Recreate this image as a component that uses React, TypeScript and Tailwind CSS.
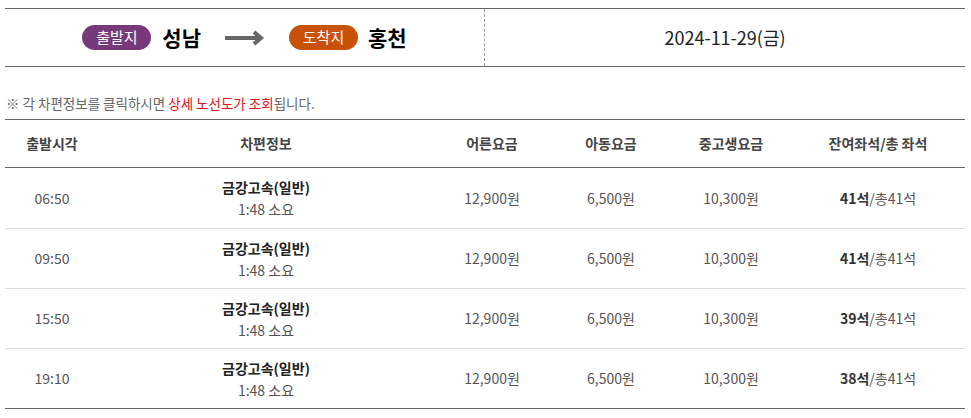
import React from 'react';

interface Trip {
  time: string;
  company: string;
  duration: string;
  adult: string;
  child: string;
  student: string;
  remain: number;
  total: number;
}

const trips: Trip[] = [
  { time: '06:50', company: '금강고속(일반)', duration: '1:48 소요', adult: '12,900원', child: '6,500원', student: '10,300원', remain: 41, total: 41 },
  { time: '09:50', company: '금강고속(일반)', duration: '1:48 소요', adult: '12,900원', child: '6,500원', student: '10,300원', remain: 41, total: 41 },
  { time: '15:50', company: '금강고속(일반)', duration: '1:48 소요', adult: '12,900원', child: '6,500원', student: '10,300원', remain: 39, total: 41 },
  { time: '19:10', company: '금강고속(일반)', duration: '1:48 소요', adult: '12,900원', child: '6,500원', student: '10,300원', remain: 38, total: 41 },
];

const font = { fontFamily: '"Noto Sans CJK KR", "Noto Sans", sans-serif' };

const Arrow = () => (
  <svg width="40" height="16" viewBox="0 0 40 16" fill="none">
    <path d="M0 8 H36" stroke="#666" strokeWidth="4" />
    <path d="M29 2 L36 8 L29 14" stroke="#666" strokeWidth="4" strokeLinejoin="miter" />
  </svg>
);

const Pill: React.FC<{ label: string; color: string }> = ({ label, color }) => (
  <span className={`inline-flex h-[25px] w-[69px] items-center justify-center rounded-full text-[15px] text-white ${color}`}>
    {label}
  </span>
);

const cols = ['w-[94px]', 'w-[334px]', 'w-[118px]', 'w-[120px]', 'w-[120px]', 'w-[174px]'];

export default function App() {
  return (
    <div className="bg-white min-h-[418px]" style={font}>
      <div className="ml-[5px] w-[960px] pt-2">
        {/* 노선 / 날짜 */}
        <div className="flex h-[59px] border-y border-[#666]">
          <div className="flex w-[480px] items-center justify-center border-r border-dashed border-[#999]">
            <Pill label="출발지" color="bg-[#763a7b]" />
            <span className="ml-[11px] text-[21px] font-bold text-black">성남</span>
            <span className="mx-[24px] flex items-center"><Arrow /></span>
            <Pill label="도착지" color="bg-[#c9520a]" />
            <span className="ml-[10px] text-[21px] font-bold text-black">홍천</span>
          </div>
          <div className="flex flex-1 items-center justify-center text-[18px] text-[#222]">
            2024-11-29(금)
          </div>
        </div>

        <p className="mt-[26px] pl-px text-[13.5px] leading-[20px] text-[#666]">
          ※ 각 차편정보를 클릭하시면 <span className="text-[#e8101c]">상세 노선도가 조회</span>됩니다.
        </p>

        {/* 배차 목록 */}
        <div className="mt-[6px] border-t border-[#666]">
          <div className="flex h-[48px] items-center border-b border-[#666] text-[14px] font-semibold text-[#444]">
            {['출발시각', '차편정보', '어른요금', '아동요금', '중고생요금', '잔여좌석/총 좌석'].map((h, i) => (
              <div key={h} className={`${cols[i]} text-center`}>{h}</div>
            ))}
          </div>
          {trips.map((t, idx) => (
            <div
              key={t.time}
              className={`flex items-center text-[14px] text-[#555] border-b ${idx === 0 ? 'h-[61px]' : 'h-[60px]'} ${idx === trips.length - 1 ? 'border-[#666]' : 'border-[#ddd]'}`}
            >
              <div className={`${cols[0]} text-center`}>{t.time}</div>
              <div className={`${cols[1]} flex flex-col items-center leading-[22px]`}>
                <span className="font-bold text-[#222]">{t.company}</span>
                <span>{t.duration}</span>
              </div>
              <div className={`${cols[2]} text-center`}>{t.adult}</div>
              <div className={`${cols[3]} text-center`}>{t.child}</div>
              <div className={`${cols[4]} text-center`}>{t.student}</div>
              <div className={`${cols[5]} text-center`}>
                <span className="font-bold text-[#333]">{t.remain}석</span>/총{t.total}석
              </div>
            </div>
          ))}
        </div>
      </div>
    </div>
  );
}
